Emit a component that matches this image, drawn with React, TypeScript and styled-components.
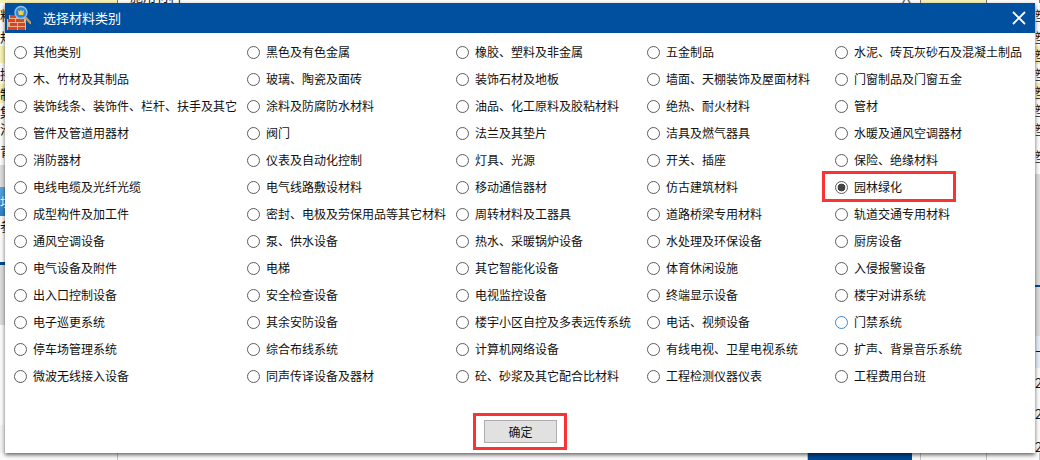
import React from "react";
import styled, { createGlobalStyle } from "styled-components";

const CATEGORIES = [
  ["其他类别", "黑色及有色金属", "橡胶、塑料及非金属", "五金制品", "水泥、砖瓦灰砂石及混凝土制品"],
  ["木、竹材及其制品", "玻璃、陶瓷及面砖", "装饰石材及地板", "墙面、天棚装饰及屋面材料", "门窗制品及门窗五金"],
  ["装饰线条、装饰件、栏杆、扶手及其它", "涂料及防腐防水材料", "油品、化工原料及胶粘材料", "绝热、耐火材料", "管材"],
  ["管件及管道用器材", "阀门", "法兰及其垫片", "洁具及燃气器具", "水暖及通风空调器材"],
  ["消防器材", "仪表及自动化控制", "灯具、光源", "开关、插座", "保险、绝缘材料"],
  ["电线电缆及光纤光缆", "电气线路敷设材料", "移动通信器材", "仿古建筑材料", "园林绿化"],
  ["成型构件及加工件", "密封、电极及劳保用品等其它材料", "周转材料及工器具", "道路桥梁专用材料", "轨道交通专用材料"],
  ["通风空调设备", "泵、供水设备", "热水、采暖锅炉设备", "水处理及环保设备", "厨房设备"],
  ["电气设备及附件", "电梯", "其它智能化设备", "体育休闲设施", "入侵报警设备"],
  ["出入口控制设备", "安全检查设备", "电视监控设备", "终端显示设备", "楼宇对讲系统"],
  ["电子巡更系统", "其余安防设备", "楼宇小区自控及多表远传系统", "电话、视频设备", "门禁系统"],
  ["停车场管理系统", "综合布线系统", "计算机网络设备", "有线电视、卫星电视系统", "扩声、背景音乐系统"],
  ["微波无线接入设备", "同声传译设备及器材", "砼、砂浆及其它配合比材料", "工程检测仪器仪表", "工程费用台班"],
].flat();

const SELECTED = "园林绿化";
const FOCUSED = "门禁系统";

type Tone = "plain" | "yellow" | "grey" | "blue" | "pale" | "navy";

const LEFT_STRIP: { h: number; tone: Tone; text?: string }[] = [
  { h: 24, tone: "plain", text: "料" },
  { h: 19, tone: "plain", text: "规" },
  { h: 17, tone: "yellow" },
  { h: 21, tone: "plain", text: "接" },
  { h: 19, tone: "yellow", text: "制" },
  { h: 17, tone: "plain", text: "集" },
  { h: 17, tone: "plain", text: "池" },
  { h: 28, tone: "plain", text: "青" },
  { h: 22, tone: "grey" },
  { h: 29, tone: "blue", text: "址" },
  { h: 20, tone: "plain", text: "参" },
  { h: 26, tone: "plain" },
  { h: 3, tone: "navy" },
  { h: 60, tone: "grey" },
  { h: 100, tone: "plain" },
];

const RIGHT_STRIP: { h: number; tone: Tone; text?: string }[] = [
  { h: 24, tone: "plain", text: "塑" },
  { h: 19, tone: "plain", text: "塑" },
  { h: 18, tone: "yellow", text: "塑" },
  { h: 19, tone: "plain", text: "塑" },
  { h: 17, tone: "yellow", text: "塑" },
  { h: 19, tone: "plain", text: "塑" },
  { h: 19, tone: "plain", text: "塑" },
  { h: 36, tone: "plain", text: "塑" },
  { h: 111, tone: "grey" },
  { h: 2, tone: "navy" },
  { h: 49, tone: "grey" },
  { h: 32, tone: "pale", text: "十" },
  { h: 30, tone: "plain", text: "2." },
  { h: 32, tone: "plain", text: "2." },
  { h: 33, tone: "plain", text: "2." },
];

const GlobalStyle = createGlobalStyle`
  html, body {
    margin: 0;
    padding: 0;
    background: #f2f2f2;
  }
  body {
    font-family: "Noto Sans CJK SC", "Liberation Sans", sans-serif;
    font-size: 12px;
    color: #111;
  }
`;

const BrickIcon: React.FC = () => (
  <svg width="24" height="26" viewBox="0 0 24 26" aria-hidden="true">
    <path d="M2 10h8v3h9v12H0V14h2z" fill="#f2b184" />
    <g fill="#d4452a">
      <rect x="3" y="10" width="6" height="3" />
      <rect x="1" y="14" width="7" height="3" />
      <rect x="9" y="14" width="8" height="3" />
      <rect x="3" y="18" width="7" height="3" />
      <rect x="11" y="18" width="7" height="3" />
      <rect x="1" y="22" width="9" height="3" />
      <rect x="11" y="22" width="7" height="3" />
    </g>
    <path d="M18.5 12.5l5 5.5" stroke="#c89a52" strokeWidth="2.4" strokeLinecap="round" />
    <circle cx="14" cy="7.5" r="6" fill="#2f86d6" stroke="#8cc4ec" strokeWidth="1.4" />
    <path d="M11 5l1.8 1.4L14 4.4l1.2 2L17 5l-.8 5h-4.4z" fill="#f6cf45" />
  </svg>
);

const CloseIcon: React.FC = () => (
  <svg width="14" height="14" viewBox="0 0 14 14" aria-hidden="true">
    <path d="M1 1l12 12M13 1L1 13" stroke="#fff" strokeWidth="1.8" />
  </svg>
);

const StripColumn: React.FC<{ cells: typeof LEFT_STRIP }> = ({ cells }) => (
  <Strip>
    {cells.map((cell, i) => (
      <StripCell key={i} $h={cell.h} $tone={cell.tone}>
        {cell.text}
      </StripCell>
    ))}
  </Strip>
);

export default function App() {
  return (
    <>
      <GlobalStyle />
      <Page>
        <TopStrip>
          <TopCell $w={118} $tone="yellow" />
          <TopCell $w={803} $tone="plain">
            <TopText>施用材料</TopText>
            <TopCloseGlyph>X</TopCloseGlyph>
          </TopCell>
          <TopCell $w={66} $tone="yellow" />
          <TopCell $w={53} $tone="plain" />
        </TopStrip>
        <StripColumn cells={LEFT_STRIP} />
        <Dialog>
          <TitleBar>
            <BrickIcon />
            <Title>选择材料类别</Title>
            <CloseButton aria-label="关闭">
              <CloseIcon />
            </CloseButton>
          </TitleBar>
          <OptionGrid>
            {CATEGORIES.map((name) => (
              <Option key={name}>
                <Radio
                  type="radio"
                  name="category"
                  readOnly
                  checked={name === SELECTED}
                  $focused={name === FOCUSED}
                />
                <OptionText>{name}</OptionText>
                {name === SELECTED && <Highlight />}
              </Option>
            ))}
          </OptionGrid>
          <Footer>
            <ButtonFrame>
              <ConfirmButton>确定</ConfirmButton>
            </ButtonFrame>
          </Footer>
        </Dialog>
        <StripColumn cells={RIGHT_STRIP} />
        <BottomStrip>
          <BottomCell $w={118} $tone="plain" />
          <BottomCell $w={690} $tone="plain" />
          <BottomCell $w={104} $tone="navy" />
          <BottomCell $w={9} $tone="plain" />
          <BottomCell $w={66} $tone="plain" />
          <BottomCell $w={53} $tone="plain" />
        </BottomStrip>
      </Page>
    </>
  );
}

const toneColor = (tone: Tone) =>
  ({
    plain: "#fbfbfb",
    yellow: "#f6f1b4",
    grey: "#dcdcdc",
    blue: "linear-gradient(#5aa5dc, #2f80c8)",
    pale: "#e4eefa",
    navy: "#004a94",
  })[tone];

const Page = styled.div`
  width: 1040px;
  height: 460px;
  display: grid;
  grid-template-columns: 5px 1030px 5px;
  grid-template-rows: 3px 450px 7px;
  overflow: hidden;
`;

const TopStrip = styled.div`
  grid-column: 1 / 4;
  display: flex;
  overflow: hidden;
`;

const TopCell = styled.div<{ $w: number; $tone: Tone }>`
  width: ${(p) => p.$w}px;
  height: 3px;
  display: flex;
  align-items: flex-end;
  padding-left: 12px;
  background: ${(p) => toneColor(p.$tone)};
  border-right: 1px solid #777;
  box-sizing: border-box;
`;

const TopText = styled.span`
  font-size: 13px;
  line-height: 14px;
  white-space: nowrap;
`;

const TopCloseGlyph = styled(TopText)`
  margin-left: auto;
  margin-right: 9px;
  font-size: 16px;
  color: #666;
`;

const BottomStrip = styled.div`
  grid-column: 1 / 4;
  display: flex;
`;

const BottomCell = styled.div<{ $w: number; $tone: Tone }>`
  width: ${(p) => p.$w}px;
  height: 7px;
  background: ${(p) => toneColor(p.$tone)};
  border-right: 1px solid ${(p) => (p.$tone === "navy" ? "#004a94" : "#c4c4c4")};
  box-sizing: border-box;
`;

const Strip = styled.div`
  display: flex;
  flex-direction: column;
  overflow: hidden;
`;

const StripCell = styled.div<{ $h: number; $tone: Tone }>`
  flex: none;
  height: ${(p) => p.$h}px;
  line-height: ${(p) => p.$h}px;
  width: 20px;
  font-size: 13px;
  color: ${(p) => (p.$tone === "blue" ? "#fff" : "#111")};
  background: ${(p) => toneColor(p.$tone)};
  overflow: hidden;
`;

const Dialog = styled.div`
  position: relative;
  z-index: 1;
  display: flex;
  flex-direction: column;
  background: #fff;
  box-shadow: 0 2px 4px rgba(0, 0, 0, 0.6);
`;

const TitleBar = styled.div`
  flex: none;
  height: 30px;
  display: flex;
  align-items: center;
  padding: 0 9px 0 2px;
  background: #00509f;
  color: #fff;
`;

const Title = styled.div`
  margin-left: 12px;
  font-size: 13px;
  line-height: 30px;
`;

const CloseButton = styled.button`
  margin-left: auto;
  padding: 0;
  display: flex;
  border: none;
  background: none;
`;

const OptionGrid = styled.div`
  display: grid;
  grid-template-columns: 233px 209px 191px 188px 1fr;
  grid-auto-rows: 27px;
  padding: 6px 0 0 9px;
`;

const Option = styled.label`
  position: relative;
  display: flex;
  align-items: center;
  gap: 6px;
  white-space: nowrap;
`;

const OptionText = styled.span`
  line-height: 25px;
  padding-bottom: 2px;
`;

const Radio = styled.input<{ $focused?: boolean }>`
  appearance: none;
  flex: none;
  width: 13px;
  height: 13px;
  margin: 0;
  box-sizing: border-box;
  border-radius: 50%;
  border: 1.3px solid ${(p) => (p.$focused ? "#2b8ce6" : "#5c5c5c")};
  background: #fff;

  &:checked {
    background: radial-gradient(circle, #444 0 3.6px, #fff 4.2px);
  }
`;

/* red annotation rectangles drawn on top of the screenshot */
const Highlight = styled.span`
  position: absolute;
  left: -13px;
  top: -3px;
  width: 134px;
  height: 31px;
  box-sizing: border-box;
  border: 3px solid #fa3434;
  pointer-events: none;
`;

const Footer = styled.div`
  display: flex;
  justify-content: center;
  padding-top: 23px;
`;

const ButtonFrame = styled.div`
  padding: 4px 7px 4px 8px;
  border: 3px solid #fa3434;
  display: flex;
`;

const ConfirmButton = styled.button`
  width: 73px;
  height: 23px;
  padding: 0;
  font: inherit;
  line-height: 21px;
  color: #111;
  background: #e1e1e1;
  border: 1px solid #adadad;
`;
